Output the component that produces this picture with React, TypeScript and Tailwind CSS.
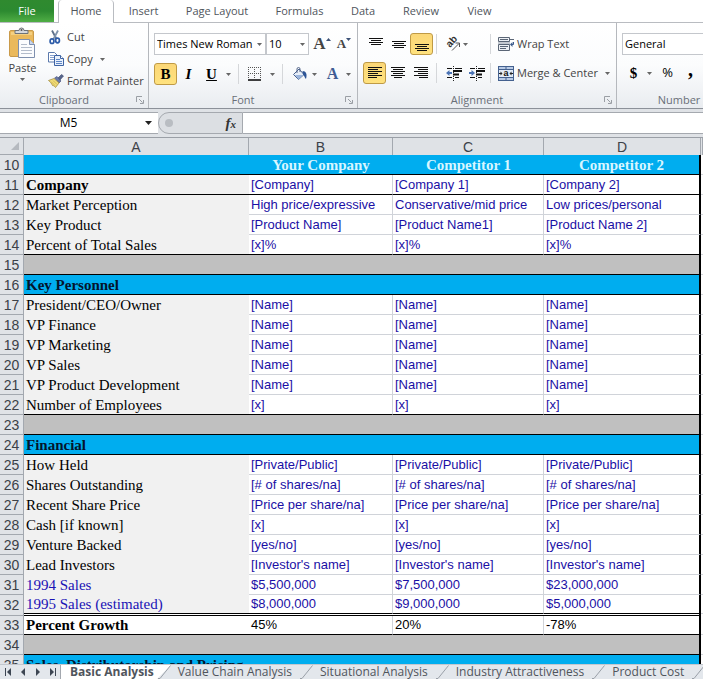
import type { ReactNode } from 'react'

type RowKind = 'banner' | 'plain' | 'company' | 'gap' | 'sales' | 'growth'

type SheetRow = {
  n: number
  kind: RowKind
  label?: string
  cells?: string[]
  line?: boolean
}

const same = (text: string) => [text, text, text]

const rows: SheetRow[] = [
  { n: 10, kind: 'banner', cells: ['Your Company', 'Competitor 1', 'Competitor 2'], line: true },
  { n: 11, kind: 'company', label: 'Company', cells: ['[Company]', '[Company 1]', '[Company 2]'], line: true },
  { n: 12, kind: 'plain', label: 'Market Perception', cells: ['High price/expressive', 'Conservative/mid price', 'Low prices/personal'] },
  { n: 13, kind: 'plain', label: 'Key Product', cells: ['[Product Name]', '[Product Name1]', '[Product Name 2]'] },
  { n: 14, kind: 'plain', label: 'Percent of Total Sales', cells: same('[x]%'), line: true },
  { n: 15, kind: 'gap', line: true },
  { n: 16, kind: 'banner', label: 'Key Personnel', line: true },
  { n: 17, kind: 'plain', label: 'President/CEO/Owner', cells: same('[Name]') },
  { n: 18, kind: 'plain', label: 'VP Finance', cells: same('[Name]') },
  { n: 19, kind: 'plain', label: 'VP Marketing', cells: same('[Name]') },
  { n: 20, kind: 'plain', label: 'VP Sales', cells: same('[Name]') },
  { n: 21, kind: 'plain', label: 'VP Product Development', cells: same('[Name]') },
  { n: 22, kind: 'plain', label: 'Number of Employees', cells: same('[x]'), line: true },
  { n: 23, kind: 'gap', line: true },
  { n: 24, kind: 'banner', label: 'Financial', line: true },
  { n: 25, kind: 'plain', label: 'How Held', cells: same('[Private/Public]') },
  { n: 26, kind: 'plain', label: 'Shares Outstanding', cells: same('[# of shares/na]') },
  { n: 27, kind: 'plain', label: 'Recent Share Price', cells: same('[Price per share/na]') },
  { n: 28, kind: 'plain', label: 'Cash [if known]', cells: same('[x]') },
  { n: 29, kind: 'plain', label: 'Venture Backed', cells: same('[yes/no]') },
  { n: 30, kind: 'plain', label: 'Lead Investors', cells: same("[Investor's name]") },
  { n: 31, kind: 'sales', label: '1994 Sales', cells: ['$5,500,000', '$7,500,000', '$23,000,000'] },
  { n: 32, kind: 'sales', label: '1995 Sales (estimated)', cells: ['$8,000,000', '$9,000,000', '$5,000,000'], line: true },
  { n: 33, kind: 'growth', label: 'Percent Growth', cells: ['45%', '20%', '-78%'], line: true },
  { n: 34, kind: 'gap', line: true },
  { n: 35, kind: 'banner', label: 'Sales, Distributorship and Pricing', line: true },
]

const sheetTabs = ['Value Chain Analysis', 'Situational Analysis', 'Industry Attractiveness', 'Product Cost']

/* ---------- small drawings ---------- */

function Caret() {
  return (
    <svg width="5" height="3" viewBox="0 0 5 3" className="shrink-0" aria-hidden="true">
      <path d="M0 0h5L2.500 3z" fill="#666" />
    </svg>
  )
}

function Launcher({ label }: { label: string }) {
  return (
    <button aria-label={label} className="absolute right-1 bottom-1">
      <svg width="8" height="8" viewBox="0 0 8 8" fill="none" stroke="#9a9ea4">
        <path d="M.5 6V.5H6M3 3l3.500 3.500M7.500 4v3.500H4" />
      </svg>
    </button>
  )
}

function PasteIcon() {
  return (
    <svg width="27" height="31" viewBox="0 0 27 31" className="shrink-0" aria-hidden="true">
      <rect x=".5" y="3.500" width="24" height="26" rx="1.500" fill="#eab95c" stroke="#c99a4a" />
      <path d="M2 5h21v3H2z" fill="#f4cf80" />
      <path d="M6 6.500V3.500h4a2.500 2.500 0 0 1 5 0h4v3z" fill="#d5d8dc" stroke="#6d7278" />
      <circle cx="12.500" cy="3" r="1" fill="#555" />
      <path d="M9.500 12.500h11l5 5v13h-16z" fill="#fbfcfe" stroke="#7e8fae" />
      <path d="M20.500 12.500v5h5" fill="#c9d6ec" stroke="#7e8fae" />
      <path d="M12 17.500h6M12 20.500h11M12 23.500h11M12 26.500h11" stroke="#b3bccb" />
    </svg>
  )
}

function CutIcon() {
  return (
    <svg width="16" height="16" viewBox="0 0 16 16" fill="none" className="shrink-0" aria-hidden="true">
      <path d="M4 1.500l4.500 8.500" stroke="#5d7089" strokeWidth="1.800" />
      <path d="M10 1.500L5.500 10" stroke="#7f93ad" strokeWidth="1.800" />
      <ellipse cx="4" cy="12.200" rx="1.900" ry="2.300" stroke="#2c5ba8" strokeWidth="1.700" />
      <ellipse cx="9.500" cy="11.500" rx="1.900" ry="2.300" stroke="#2c5ba8" strokeWidth="1.700" />
    </svg>
  )
}

function CopyIcon() {
  return (
    <svg width="16" height="14" viewBox="0 0 16 14" className="shrink-0" aria-hidden="true">
      <path d="M.5.5h6l2.500 2.500v7H.5z" fill="#fff" stroke="#5b79ac" />
      <path d="M2 3.500h4M2 5.500h4M2 7.500h4" stroke="#86a1cf" />
      <path d="M6.500 3.500h6l3 3v7h-9z" fill="#e8f0fb" stroke="#3d62a3" />
      <path d="M12.500 3.500v3h3" fill="#fff" stroke="#3d62a3" />
      <path d="M8 7.500h4M8 9.500h6M8 11.500h6" stroke="#5f86c5" />
    </svg>
  )
}

function PainterIcon() {
  return (
    <svg width="16" height="14" viewBox="0 0 16 14" className="shrink-0" aria-hidden="true">
      <path d="M10 4l3.500-3.500 2 1.500L12 6z" fill="#56658c" stroke="#39456a" strokeWidth=".6" />
      <path d="M6.500 4L9 2.500l4 4.500-2 2z" fill="#6b7aa8" stroke="#3c4874" strokeWidth=".6" />
      <path d="M.5 6.500L6 4.500l5 4.500-3.500 4.500c-1-1.500-2-2-3-2-1-2-2-3.500-4-5z" fill="#f1dd7a" stroke="#9a8334" strokeWidth=".7" />
      <path d="M3 7.500l4 4M5 6.500l4 4" stroke="#c9ab42" strokeWidth=".7" />
    </svg>
  )
}

function BordersIcon() {
  return (
    <svg width="14" height="14" viewBox="0 0 14 14" fill="none" className="shrink-0" aria-hidden="true">
      <path d="M0 .5h14M0 6.500h14M.5 0v12M6.500 0v12M12.500 0v12" stroke="#555" strokeDasharray="1 1" />
      <path d="M0 13h13" stroke="#000" strokeWidth="1.500" />
    </svg>
  )
}

function FillIcon() {
  return (
    <svg width="16" height="15" viewBox="0 0 16 15" className="shrink-0" aria-hidden="true">
      <path d="M1.500 7.500L7 2l5 5.500-5.500 5z" fill="#e7eef8" stroke="#465f8c" />
      <path d="M3 8h8.500l-5 4.500z" fill="#9bb5dc" />
      <path d="M5 6V2a1.500 1.500 0 0 1 3 0v3" fill="none" stroke="#54678a" />
      <path d="M10.500 4c3.500 0 5 3 3.500 8-1.500-1-1.500-3.500-3-4.500z" fill="#2e5596" />
    </svg>
  )
}

/* stacked text lines, each drawn from an [x1, x2] pair */
function Lines({ spans, top }: { spans: number[][]; top: number }) {
  return (
    <svg width="16" height="16" viewBox="0 0 16 16" stroke="#111" aria-hidden="true">
      {spans.map(([a, b], i) => (
        <path key={i} d={`M${a} ${top + i * 2 + 0.5}H${b}`} />
      ))}
    </svg>
  )
}

const vSpans = [[1, 15], [3, 13], [1, 15], [3, 13]]
const leftSpans = [[1, 15], [1, 11], [1, 15], [1, 11], [1, 15], [1, 10]]
const centerSpans = [[1, 15], [3, 13], [1, 15], [3, 13], [1, 15], [4, 12]]
const rightSpans = [[1, 15], [5, 15], [1, 15], [5, 15], [1, 15], [6, 15]]

function IndentIcon({ out = false }: { out?: boolean }) {
  return (
    <svg width="16" height="16" viewBox="0 0 16 16" aria-hidden="true">
      <path d="M7.500 1v15" stroke="#222" strokeDasharray="1 1" />
      <path d="M1 3.500h5M9 3.500h7M1 12.500h5M9 12.500h4" stroke="#111" />
      <path d="M7 6h9M7 9.500h6" stroke="#111" strokeWidth="2" />
      <path d={out ? 'M0 8l3.500-3v2H6v2H3.500v2z' : 'M6 8L2.500 5v2H0v2h2.500v2z'} fill="#4a73b5" />
    </svg>
  )
}

function OrientationIcon() {
  return (
    <svg width="16" height="16" viewBox="0 0 16 16" className="shrink-0 overflow-visible" aria-hidden="true">
      <text transform="translate(5 12) rotate(-48)" fontFamily="Liberation Sans" fontSize="10" fontWeight="bold" fill="#333">ab</text>
      <path d="M7 14.500l7-7M10.500 7h4v4" fill="none" stroke="#555" />
    </svg>
  )
}

function WrapIcon() {
  return (
    <svg width="16" height="16" viewBox="0 0 16 16" className="shrink-0" aria-hidden="true">
      <path d="M.5 1.500h11v4H.5zM.5 8.500h11v6H.5z" fill="#eef1f5" stroke="#5b6676" />
      <path d="M2 3.500h8M2 10.500h8M2 12.500h6" stroke="#5b6676" />
      <path d="M0 7h12" stroke="#8c95a3" />
      <path d="M12 3.500h4" stroke="#5b6676" />
      <path d="M15.500 6v2.500H13" fill="none" stroke="#3b5a8c" />
      <path d="M12 8.500l2.500-2.500v5z" fill="#3b5a8c" />
    </svg>
  )
}

function MergeIcon() {
  return (
    <svg width="16" height="15" viewBox="0 0 16 15" className="shrink-0" aria-hidden="true">
      <rect x=".5" y=".5" width="15" height="14" fill="#b9cbe6" stroke="#44618f" />
      <path d="M0 3.500h16M0 11.500h16M8 0v3M8 12v3" stroke="#44618f" />
      <path d="M1 4h14v7H1z" fill="#e2ebf7" />
      <path d="M1 7.500h3M12 7.500h3" stroke="#222" />
      <path d="M2.500 5.500l2 2-2 2zM13.500 5.500l-2 2 2 2z" fill="#222" />
      <text x="8" y="10" textAnchor="middle" fontFamily="Liberation Sans" fontSize="9" fontWeight="bold" fill="#111">a</text>
    </svg>
  )
}

/* ---------- ribbon pieces ---------- */

function Group({ name, launcher = true, className, children }: { name: string; launcher?: boolean; className: string; children: ReactNode }) {
  return (
    <section className={`relative flex shrink-0 flex-col border-r border-[#b5b8bd] ${className}`}>
      <div className="flex-1">{children}</div>
      <h2 className={`h-4 text-center leading-4 text-[#6a6f78] ${launcher ? 'pr-5' : ''}`}>{name}</h2>
      {launcher && <Launcher label={`${name} options`} />}
    </section>
  )
}

function Tool({ label, on = false, children }: { label: string; on?: boolean; children: ReactNode }) {
  return (
    <button
      aria-label={label}
      className={`flex h-[22px] w-[23px] shrink-0 items-center justify-center ${on ? 'rounded-[3px] border border-[#bf9a45] bg-linear-to-b from-[#fbd777] to-[#ffe27e]' : ''}`}
    >
      {children}
    </button>
  )
}

function Divider() {
  return <span className="h-5 w-px shrink-0 bg-[#d5d7da]" />
}

function Combo({ label, value, className }: { label: string; value: string; className: string }) {
  return (
    <label className={`relative block shrink-0 ${className}`}>
      <select aria-label={label} className="h-[22px] w-full appearance-none border border-[#c4c7cc] bg-white pl-[2px] text-black">
        <option>{value}</option>
      </select>
      <span className="pointer-events-none absolute inset-y-0 right-1 flex items-center">
        <Caret />
      </span>
    </label>
  )
}

function Ribbon() {
  return (
    <div className="flex h-[86px] shrink-0 overflow-hidden border-b border-[#8c9199] bg-linear-to-b from-white via-[#fbfcfd] to-[#e9ecf0]">
      <Group name="Clipboard" className="w-[149px]">
        <div className="flex pt-[3px]">
          <button className="flex w-[45px] shrink-0 flex-col items-center pt-px">
            <PasteIcon />
            <span className="leading-5">Paste</span>
            <Caret />
          </button>
          <div className="flex flex-col pl-[3px]">
            <button className="flex h-[22px] items-center gap-[3px]">
              <CutIcon />
              Cut
            </button>
            <button className="flex h-[22px] items-center gap-[3px]">
              <CopyIcon />
              Copy
              <span className="w-px" />
              <Caret />
            </button>
            <button className="flex h-[22px] items-center gap-[3px] whitespace-nowrap">
              <PainterIcon />
              Format Painter
            </button>
          </div>
        </div>
      </Group>

      <Group name="Font" className="w-[209px]">
        <div className="flex items-center pt-[10px] pl-[5px]">
          <Combo label="Font name" value="Times New Roman" className="w-[112px]" />
          <Combo label="Font size" value="10" className="w-[43px]" />
          <button aria-label="Grow font" className="flex w-[26px] justify-center font-[Liberation_Serif] text-[17px] leading-5 font-bold">
            A
            <svg width="5" height="3" viewBox="0 0 5 3" className="mt-1"><path d="M0 3h5L2.500 0z" fill="#3d5277" /></svg>
          </button>
          <button aria-label="Shrink font" className="flex w-[18px] justify-center font-[Liberation_Serif] text-[13px] leading-5 font-bold">
            A
            <svg width="5" height="3" viewBox="0 0 5 3" className="mt-1"><path d="M0 0h5L2.500 3z" fill="#3d5277" /></svg>
          </button>
        </div>
        <div className="flex items-center pt-[7px] pl-[5px] font-[Liberation_Serif] text-[15px] text-black">
          <Tool label="Bold" on><b className="font-black">B</b></Tool>
          <Tool label="Italic"><b className="italic">I</b></Tool>
          <Tool label="Underline"><b className="underline">U</b></Tool>
          <button aria-label="Underline styles" className="w-[15px] pl-[3px]"><Caret /></button>
          <Divider />
          <button aria-label="Borders" className="flex w-[43px] items-center justify-center gap-2 pl-[2px]"><BordersIcon /><Caret /></button>
          <Divider />
          <button aria-label="Fill color" className="flex w-[40px] items-center justify-center gap-1 pl-[2px]"><FillIcon /><Caret /></button>
          <button aria-label="Font color" className="flex w-[30px] items-center justify-center gap-2 pl-[2px] text-base font-bold text-[#3f5c93]">A<Caret /></button>
        </div>
      </Group>

      <Group name="Alignment" className="w-[259px]">
        <div className="flex items-center pt-[10px] pl-[6px]">
          <Tool label="Top align"><Lines spans={vSpans} top={2} /></Tool>
          <Tool label="Middle align"><Lines spans={vSpans} top={5} /></Tool>
          <Tool label="Bottom align" on><Lines spans={vSpans} top={8} /></Tool>
          <span className="w-[3px]" />
          <Divider />
          <button aria-label="Orientation" className="flex w-[53px] items-center gap-[2px] pl-2"><OrientationIcon /><Caret /></button>
          <Divider />
          <button className="flex items-center gap-[3px] pl-[7px] whitespace-nowrap"><WrapIcon />Wrap Text</button>
        </div>
        <div className="flex items-center pt-[7px] pl-[5px]">
          <Tool label="Align left" on><Lines spans={leftSpans} top={2} /></Tool>
          <Tool label="Center"><Lines spans={centerSpans} top={2} /></Tool>
          <Tool label="Align right"><Lines spans={rightSpans} top={2} /></Tool>
          <span className="w-1" />
          <Divider />
          <span className="flex w-[53px] pl-[5px]">
            <Tool label="Decrease indent"><IndentIcon out /></Tool>
            <Tool label="Increase indent"><IndentIcon /></Tool>
          </span>
          <Divider />
          <button className="flex items-center gap-[3px] pl-[7px] whitespace-nowrap"><MergeIcon />Merge &amp; Center<span className="w-px" /><Caret /></button>
        </div>
      </Group>

      <Group name="Number" launcher={false} className="w-[125px]">
        <div className="flex items-center pt-[10px] pl-[5px]">
          <Combo label="Number format" value="General" className="w-[115px]" />
        </div>
        <div className="flex items-center pt-[7px] pl-[5px] text-black">
          <Tool label="Accounting format"><b className="font-[Liberation_Serif] text-[15px]">$</b></Tool>
          <button aria-label="Currency list" className="w-[11px] pl-[2px]"><Caret /></button>
          <Tool label="Percent style"><span className="text-[13px]">%</span></Tool>
          <Tool label="Comma style"><b className="mb-2 font-[Liberation_Serif] text-[20px] leading-4">,</b></Tool>
        </div>
      </Group>
    </div>
  )
}

function FormulaBar() {
  return (
    <div className="flex h-[29px] shrink-0 border-b border-[#9a9fa6] bg-[#dfe2e6] pt-[3px] pb-[3px]">
      <div className="flex w-[158px] items-center border-y border-[#a5a9af] bg-white pr-[6px]">
        <input aria-label="Name box" defaultValue="M5" className="w-full min-w-0 pr-2 text-center text-[12px] leading-5 text-black" />
        <button aria-label="Named ranges">
          <svg width="7" height="4" viewBox="0 0 7 4"><path d="M0 0h7L3.500 4z" fill="#222" /></svg>
        </button>
      </div>
      <div className="flex w-[85px] items-center justify-between rounded-l-full border border-[#a5a9af] bg-[#dcdfe3] px-[6px]">
        <span className="size-2 rounded-full bg-[#b9bdc2]" />
        <button aria-label="Insert function" className="font-[Liberation_Serif] text-[15px] leading-5 font-bold text-[#333] italic">
          f<span className="text-[11px]">x</span>
        </button>
      </div>
      <input aria-label="Formula" className="min-w-0 flex-1 border-y border-[#a5a9af] bg-white" />
    </div>
  )
}

/* ---------- worksheet ---------- */

function labelStyle(kind: RowKind) {
  switch (kind) {
    case 'banner': return 'bg-[#00adef] font-bold text-[#04142c]'
    case 'gap': return 'bg-[#c0c0c0]'
    case 'growth': return 'bg-white font-bold text-black'
    case 'company': return 'bg-[#f1f1f1] font-bold text-black'
    case 'sales': return 'bg-[#f1f1f1] text-[#1a12b5]'
    default: return 'bg-[#f1f1f1] text-black'
  }
}

function SheetLine({ row }: { row: SheetRow }) {
  const height = row.n === 32 || row.n === 33 ? 'h-[19px]' : 'h-5'
  const filled = row.kind === 'banner' || row.kind === 'gap'
  const line = row.line ? 'border-b border-b-black' : 'border-b border-b-[#d0d3d9]'
  const labelLine = row.line ? line : 'border-b border-b-[#f1f1f1]'
  const headLine = row.n === 32 ? '' : 'border-b'

  return (
    <tr className={height}>
      <th scope="row" className={`border-r border-[#a3a8af] bg-[#e0e3e7] text-center text-[14px] font-normal text-[#3c4148] ${headLine}`}>
        {row.n}
      </th>
      <td className={`pl-[2px] font-[Liberation_Serif] text-[15px] ${labelLine} ${labelStyle(row.kind)}`}>{row.label}</td>
      {[0, 1, 2].map((i) => {
        const text = row.cells?.[i]
        const edge = i === 2 ? 'border-r-2 border-r-black' : filled ? '' : 'border-r border-r-[#d0d3d9]'
        if (filled) {
          return (
            <td key={i} className={`text-center font-[Liberation_Serif] text-[15px] font-bold text-[#d8f6ff] ${line} ${edge} ${row.kind === 'gap' ? 'bg-[#c0c0c0]' : 'bg-[#00adef]'}`}>
              {text}
            </td>
          )
        }
        return (
          <td key={i} className={`bg-white pl-[2px] text-[13px] ${line} ${edge} ${row.kind === 'growth' ? 'text-black' : 'text-[#1a0fa5]'}`}>
            {text}
          </td>
        )
      })}
      <td className="border-b border-b-[#d0d3d9] bg-white" />
    </tr>
  )
}

/* second stroke of the double rule above the growth row */
function DoubleRule() {
  return (
    <tr className="h-[2px]" aria-hidden="true">
      <td className="border-r border-b border-[#a3a8af] bg-[#e0e3e7]" />
      <td colSpan={4} className="border-r-2 border-b border-black bg-white" />
      <td className="bg-white" />
    </tr>
  )
}

function Sheet() {
  return (
    <div className="min-h-0 flex-1 overflow-hidden font-[Liberation_Sans,sans-serif]">
      <table className="w-full table-fixed border-separate border-spacing-0 leading-[18px] whitespace-nowrap">
        <colgroup>
          <col className="w-[24px]" />
          <col className="w-[225px]" />
          <col className="w-[144px]" />
          <col className="w-[151px]" />
          <col className="w-[157px]" />
          <col />
        </colgroup>
        <thead>
          <tr className="h-[17px] bg-[#dfe2e6] text-[14px] leading-4 text-[#3c4148]">
            <th aria-label="Select all" className="border-r border-b border-[#a3a8af]">
              <svg width="8" height="8" viewBox="0 0 8 8" className="mr-1 ml-auto"><path d="M8 0v8H0z" fill="#b5b9bf" /></svg>
            </th>
            {['A', 'B', 'C', 'D', ''].map((c) => (
              <th key={c} scope="col" className="border-r border-[#a3a8af] font-normal">{c}</th>
            ))}
          </tr>
        </thead>
        <tbody>
          {rows.slice(0, 23).map((row) => <SheetLine key={row.n} row={row} />)}
          <DoubleRule />
          {rows.slice(23).map((row) => <SheetLine key={row.n} row={row} />)}
        </tbody>
      </table>
    </div>
  )
}

function Slash() {
  return (
    <svg width="14" height="14" viewBox="0 0 14 14" className="shrink-0" aria-hidden="true">
      <path d="M0 14L14 0v14z" fill="#e3e7ec" />
      <path d="M1 13.500h2L13.500.5" fill="none" stroke="#9aa0a8" />
    </svg>
  )
}

function NavButton({ label, d }: { label: string; d: string }) {
  return (
    <button aria-label={label} className="flex flex-1 justify-center">
      <svg width="8" height="8" viewBox="0 0 8 8" fill="#3d4653"><path d={d} /></svg>
    </button>
  )
}

function SheetTabs() {
  return (
    <nav className="mb-1 flex h-[15px] shrink-0 items-center overflow-hidden border-t border-[#c3c8cf] bg-[#e3e7ec] text-[12px] leading-[14px] whitespace-nowrap text-[#50555c]">
      <div className="flex h-full w-[61px] shrink-0 items-center border-r border-[#a3a8af]">
        <NavButton label="First sheet" d="M1 0h1v8H1zM7 0v8L3 4z" />
        <NavButton label="Previous sheet" d="M6 0v8L2 4z" />
        <NavButton label="Next sheet" d="M2 0v8l4-4z" />
        <NavButton label="Last sheet" d="M6 0h1v8H6zM1 0v8l4-4z" />
      </div>
      <button className="bg-white pr-[3px] pl-[9px] font-bold">Basic Analysis</button>
      <span className="bg-white"><Slash /></span>
      {sheetTabs.map((t) => (
        <span key={t} className="flex shrink-0 items-center">
          <button className="px-[7px]">{t}</button>
          <Slash />
        </span>
      ))}
    </nav>
  )
}

export default function App() {
  return (
    <div className="flex h-screen flex-col overflow-hidden bg-white font-[Open_Sans,sans-serif] text-[11px] text-[#444]">
      {/* ribbon tabs */}
      <nav className="flex h-[23px] shrink-0 border-b border-[#b9bcc1] text-[#50555c]">
        <button className="w-[54px] bg-linear-to-b from-[#2f8a2f] via-[#2c8a30] to-[#4fae45] text-white">File</button>
        <button className="-mb-px ml-1 w-[56px] rounded-t-sm border-x border-[#b9bcc1] bg-white">Home</button>
        <button className="w-[59px]">Insert</button>
        <button className="w-[88px]">Page Layout</button>
        <button className="w-[77px]">Formulas</button>
        <button className="w-[50px]">Data</button>
        <button className="w-[66px]">Review</button>
        <button className="w-[51px]">View</button>
      </nav>
      <Ribbon />
      <FormulaBar />
      <Sheet />
      <SheetTabs />
    </div>
  )
}
